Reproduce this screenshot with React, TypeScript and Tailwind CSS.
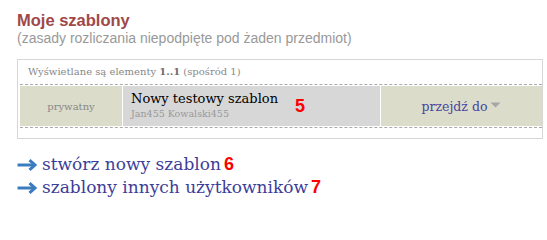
import React from "react";

function Arrow() {
  return (
    <svg width="20" height="12" viewBox="0 0 20 12" className="shrink-0">
      <line x1="0.5" y1="6" x2="17.5" y2="6" stroke="#3b7cbf" strokeWidth="3" />
      <polyline points="12.5,1.2 18,6 12.5,10.8" fill="none" stroke="#3b7cbf" strokeWidth="3" strokeLinejoin="miter" />
    </svg>
  );
}

export default function App() {
  const serif = "font-['DejaVu_Serif',serif]";
  return (
    <div className="pl-[17px] pt-[11px] bg-white min-h-[205px]">
      <h1 className="font-['Liberation_Sans',Arial,sans-serif] text-[16.5px] leading-[19px] font-bold text-[#a04848]">
        Moje szablony
      </h1>
      <p className="font-['Liberation_Sans',Arial,sans-serif] text-[14px] leading-[16px] text-[#999999]">
        (zasady rozliczania niepodpięte pod żaden przedmiot)
      </p>

      <div className="mt-[13px] w-[526px] border border-[#d6d6d6] pl-[2px] pb-[10px]">
        <div className={`${serif} h-[25px] border-b border-dashed border-[#aaaaaa] pl-[8px] text-[10px] leading-[24px] text-[#888888]`}>
          Wyświetlane są elementy <b className="text-[#707070]">1..1</b> (spośród 1)
        </div>
        <div className="mt-[1px] flex h-[40px] gap-[1px] bg-white">
          <div className={`${serif} flex w-[102px] items-center justify-center bg-[#dcdccb] text-[10px] text-[#888888]`}>
            prywatny
          </div>
          <div className="relative w-[257px] bg-[#d7d7d7] pl-[8px] pt-[5px]">
            <div className={`${serif} text-[13px] leading-[15px] text-black`}>Nowy testowy szablon</div>
            <div className={`${serif} mt-[2px] text-[9.5px] leading-[11px] text-[#999999]`}>Jan455 Kowalski455</div>
            <span className="absolute left-[172px] top-[11px] font-['Liberation_Sans',Arial,sans-serif] text-[18px] leading-[18px] font-bold text-[#ff0000]">
              5
            </span>
          </div>
          <div className="flex flex-1 items-center justify-center bg-[#dcdccb]">
            <span className={`${serif} text-[12.5px] leading-[15px] text-[#4545a0]`}>przejdź do</span>
            <svg width="11" height="6" viewBox="0 0 11 6" className="ml-[3px] mb-[2px]">
              <polygon points="0.5,0.5 10.5,0.5 5.5,5.5" fill="#a6a6a6" />
            </svg>
          </div>
        </div>
        <div className="mt-[1px] border-t border-dashed border-[#aaaaaa]" />
      </div>

      <div className={`${serif} mt-[14px] text-[17px] leading-[23px] text-[#3d3d99]`}>
        <div className="flex items-center">
          <Arrow />
          <span className="ml-[5px]">stwórz nowy szablon</span>
          <span className="ml-[3px] font-['Liberation_Sans',Arial,sans-serif] text-[18px] font-bold text-[#ff0000]">6</span>
        </div>
        <div className="flex items-center">
          <Arrow />
          <span className="ml-[5px]">szablony innych użytkowników</span>
          <span className="ml-[3px] font-['Liberation_Sans',Arial,sans-serif] text-[18px] font-bold text-[#ff0000]">7</span>
        </div>
      </div>
    </div>
  );
}
